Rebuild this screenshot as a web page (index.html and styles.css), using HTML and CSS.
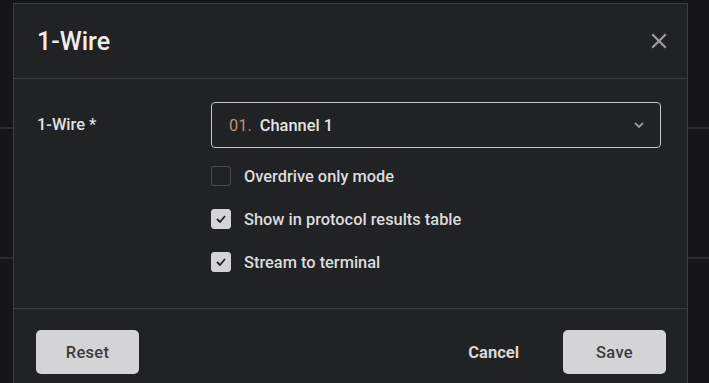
FILE: index.html
```html
<!DOCTYPE html>
<html>
<head>
<meta charset="utf-8">
<link rel="stylesheet" href="styles.css">
</head>
<body>
<div class="dialog">
  <div class="header">
    <h1 class="title">1-Wire</h1>
    <button class="close" aria-label="Close">
      <svg width="16" height="16" viewBox="0 0 16 16"><path d="M2 2 L14 14 M14 2 L2 14" stroke="#9d9d9f" stroke-width="2.2" stroke-linecap="square"/></svg>
    </button>
  </div>
  <div class="body">
    <div class="field-row">
      <label class="field-label">1-Wire *</label>
      <div class="field-control">
        <div class="select">
          <span class="num">01.</span>
          <span class="value">Channel 1</span>
          <svg class="chev" width="10" height="6" viewBox="0 0 10 6"><path d="M1 1 L5 5 L9 1" fill="none" stroke="#9a9a9c" stroke-width="1.8"/></svg>
        </div>
        <div class="checks">
          <div class="check-row"><span class="box"></span><span class="check-label">Overdrive only mode</span></div>
          <div class="check-row"><span class="box on"><svg width="10" height="8" viewBox="0 0 10 8"><path d="M1 4 L4 7 L9 1" fill="none" stroke="#222" stroke-width="1.8"/></svg></span><span class="check-label">Show in protocol results table</span></div>
          <div class="check-row"><span class="box on"><svg width="10" height="8" viewBox="0 0 10 8"><path d="M1 4 L4 7 L9 1" fill="none" stroke="#222" stroke-width="1.8"/></svg></span><span class="check-label">Stream to terminal</span></div>
        </div>
      </div>
    </div>
  </div>
  <div class="footer">
    <button class="btn">Reset</button>
    <div class="spacer"></div>
    <button class="btn-text">Cancel</button>
    <button class="btn">Save</button>
  </div>
</div>
</body>
</html>
```
FILE: styles.css
```css
html, body { margin: 0; padding: 0; }
body {
  width: 709px;
  height: 383px;
  overflow: hidden;
  background:
    linear-gradient(#2a2b2e, #2a2b2e) 0 127px / 100% 2px no-repeat,
    linear-gradient(#2a2b2e, #2a2b2e) 0 257px / 100% 2px no-repeat,
    #161618;
  font-family: Roboto, "Liberation Sans", sans-serif;
  color: #e2e2e4;
}
.dialog {
  margin: 3px 0 0 13px;
  width: 675px;
  height: 380px;
  background: #212224;
  border: 1px solid #3d3e42;
  border-bottom: none;
  box-sizing: border-box;
}
.header {
  height: 75px;
  display: flex;
  align-items: center;
  justify-content: space-between;
  padding: 0 20px 0 23px;
  border-bottom: 1px solid #3d3e42;
  box-sizing: border-box;
}
.title {
  margin: 0;
  font-size: 25px;
  font-weight: 500;
  color: #ededef;
}
.close {
  background: none;
  border: none;
  padding: 0;
  display: flex;
}
.body {
  height: 230px;
  padding: 23px 0 0 23px;
  box-sizing: border-box;
  border-bottom: 1px solid #3d3e42;
}
.field-row { display: flex; }
.field-label {
  width: 174px;
  font-size: 16.4px;
  font-weight: 500;
  line-height: 46px;
  color: #e0e0e2;
}
.field-control { width: 450px; }
.select {
  height: 46px;
  border: 1px solid #c6c6c8;
  border-radius: 4px;
  box-sizing: border-box;
  display: flex;
  align-items: center;
  padding: 0 16px 0 17px;
  font-size: 16.4px;
  font-weight: 500;
}
.num { color: #c08f72; font-weight: 400; margin-right: 8px; }
.value { flex: 1; color: #e4e4e6; }
.checks {
  display: flex;
  flex-direction: column;
  gap: 23px;
  margin-top: 18px;
}
.check-row { display: flex; align-items: center; height: 20px; }
.box {
  width: 20px;
  height: 20px;
  box-sizing: border-box;
  border: 1px solid #4a4b4f;
  border-radius: 3px;
  margin-right: 13px;
  display: flex;
  align-items: center;
  justify-content: center;
}
.box.on { background: #d4d4d6; border-color: #d4d4d6; }
.check-label { font-size: 16.4px; font-weight: 500; color: #dcdcde; }
.footer {
  display: flex;
  align-items: center;
  padding: 21px 21px 0 22px;
}
.spacer { flex: 1; }
.btn {
  width: 103px;
  height: 44px;
  padding: 0;
  background: #d4d4d6;
  border: none;
  border-radius: 5px;
  font-family: Roboto, "Liberation Sans", sans-serif;
  font-size: 16.5px;
  font-weight: 500;
  letter-spacing: 0.3px;
  color: #3c3c3e;
}
.btn-text {
  background: none;
  border: none;
  padding: 0;
  font-family: Roboto, "Liberation Sans", sans-serif;
  font-size: 16.5px;
  font-weight: 700;
  color: #d8d8da;
  margin-right: 44px;
}
```
